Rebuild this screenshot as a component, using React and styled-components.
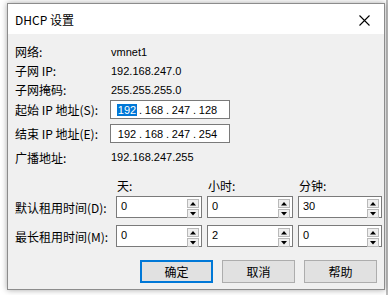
import React from "react";
import styled, { createGlobalStyle } from "styled-components";

const GlobalStyle = createGlobalStyle`
  html, body {
    margin: 0;
    padding: 0;
    background: #ffffff;
  }
`;

const CJK = `"Noto Sans CJK SC", "Microsoft YaHei", sans-serif`;
const LATIN = `"Liberation Sans", Arial, sans-serif`;

// 전체 화면 (뒤쪽 창 포함)
const Desktop = styled.div`
  position: relative;
  width: 388px;
  height: 295px;
  overflow: hidden;
  background: #ffffff;
`;

// 오른쪽 끝에 보이는 뒤쪽 창 테두리
const BackEdge = styled.div`
  position: absolute;
  right: 0;
  top: 0;
  width: 2px;
  height: 295px;
  background: #bcbcbc;
`;

const Window = styled.div`
  position: absolute;
  left: 7px;
  top: 3px;
  width: 376px;
  height: 285px;
  border: 1px solid #8c8c8c;
  background: #f0f0f0;
  box-shadow: 0 0 6px rgba(0, 0, 0, 0.35);
  display: flex;
  flex-direction: column;
`;

const TitleBar = styled.div`
  height: 30px;
  flex: none;
  background: #ffffff;
  display: flex;
  align-items: center;
  justify-content: space-between;
  padding: 0 6px 0 7px;
`;

const Title = styled.div`
  font-family: ${CJK};
  font-size: 12px;
  color: #000;
  margin-top: 1px;
`;

const CloseBox = styled.div`
  width: 28px;
  height: 22px;
  display: flex;
  align-items: center;
  justify-content: center;
  margin-top: 2px;
`;

const Body = styled.div`
  flex: 1;
  display: flex;
  flex-direction: column;
  padding: 8px 7px 0 7px;
`;

const Row = styled.div`
  display: flex;
  align-items: center;
  height: ${(p) => p.$h}px;
  margin-top: ${(p) => p.$mt || 0}px;
`;

const Label = styled.div`
  width: 96px;
  flex: none;
  font-family: ${CJK};
  font-size: 12px;
  color: #000;
  white-space: nowrap;
`;

const Value = styled.div`
  font-family: ${LATIN};
  font-size: 11px;
  color: #000;
`;

const IpBox = styled.div`
  width: 113px;
  height: 17px;
  margin-left: -1px;
  border: 1px solid #7a7a7a;
  background: #fff;
  display: flex;
  align-items: center;
  padding-left: 5px;
  font-family: ${LATIN};
  font-size: 11px;
  color: #000;
`;

const Octet = styled.span`
  width: 22px;
  text-align: center;
`;

const Selected = styled.span`
  background: #0078d7;
  color: #fff;
  padding: 0 1px;
`;

const Dot = styled.span`
  width: 5px;
  text-align: center;
`;

const LeaseGrid = styled.div`
  display: grid;
  grid-template-columns: 96px 86px 86px 84px;
  column-gap: 5px;
  align-items: center;
  height: ${(p) => p.$h}px;
  margin-top: ${(p) => p.$mt || 0}px;
`;

const ColHead = styled.div`
  font-family: ${CJK};
  font-size: 12px;
  color: #000;
  padding-left: 1px;
`;

const Spin = styled.div`
  height: 20px;
  border: 1px solid #7a7a7a;
  background: #fff;
  display: flex;
  align-items: flex-start;
  justify-content: space-between;
  padding: 0 2px 0 4px;
`;

const SpinValue = styled.span`
  font-family: ${LATIN};
  font-size: 11px;
  color: #000;
  margin-top: 3px;
`;

const Arrows = styled.div`
  display: flex;
  flex-direction: column;
  gap: 1px;
  margin-top: 2px;
`;

const ArrowBtn = styled.div`
  width: 10px;
  height: 7px;
  border: 1px solid #b9b9b9;
  background: #efefef;
  display: flex;
  align-items: center;
  justify-content: center;
`;

const ButtonBar = styled.div`
  display: flex;
  justify-content: flex-end;
  gap: 9px;
  margin-top: 13px;
`;

const Button = styled.div`
  width: 73px;
  height: 23px;
  box-sizing: border-box;
  background: #e1e1e1;
  border: ${(p) => (p.$default ? "2px solid #0078d7" : "1px solid #adadad")};
  display: flex;
  align-items: center;
  justify-content: center;
  font-family: ${CJK};
  font-size: 12px;
  color: #000;
`;

function Tri({ down }) {
  return (
    <svg width="6" height="4" viewBox="0 0 6 4">
      <path d={down ? "M0 0 L6 0 L3 3.5 Z" : "M3 0 L6 3.5 L0 3.5 Z"} fill="#000" />
    </svg>
  );
}

function SpinBox({ value }) {
  return (
    <Spin>
      <SpinValue>{value}</SpinValue>
      <Arrows>
        <ArrowBtn>
          <Tri />
        </ArrowBtn>
        <ArrowBtn>
          <Tri down />
        </ArrowBtn>
      </Arrows>
    </Spin>
  );
}

function IpField({ parts, selectFirst }) {
  return (
    <IpBox>
      {parts.map((p, i) => (
        <React.Fragment key={i}>
          {i > 0 && <Dot>.</Dot>}
          <Octet>{i === 0 && selectFirst ? <Selected>{p}</Selected> : p}</Octet>
        </React.Fragment>
      ))}
    </IpBox>
  );
}

export default function App() {
  return (
    <>
      <GlobalStyle />
      <Desktop>
        <BackEdge />
        <Window>
          <TitleBar>
            <Title>DHCP 设置</Title>
            <CloseBox>
              <svg width="11" height="11" viewBox="0 0 11 11">
                <path d="M0.5 0.5 L10.5 10.5 M10.5 0.5 L0.5 10.5" stroke="#000" strokeWidth="1.1" />
              </svg>
            </CloseBox>
          </TitleBar>

          <Body>
            <Row $h={19}>
              <Label>网络:</Label>
              <Value>vmnet1</Value>
            </Row>
            <Row $h={19}>
              <Label>子网 IP:</Label>
              <Value>192.168.247.0</Value>
            </Row>
            <Row $h={19}>
              <Label>子网掩码:</Label>
              <Value>255.255.255.0</Value>
            </Row>
            <Row $h={19} $mt={1}>
              <Label>起始 IP 地址(S):</Label>
              <IpField parts={["192", "168", "247", "128"]} selectFirst />
            </Row>
            <Row $h={19} $mt={5}>
              <Label>结束 IP 地址(E):</Label>
              <IpField parts={["192", "168", "247", "254"]} />
            </Row>
            <Row $h={20} $mt={4}>
              <Label>广播地址:</Label>
              <Value>192.168.247.255</Value>
            </Row>

            <LeaseGrid $h={18} $mt={9}>
              <span />
              <ColHead>天:</ColHead>
              <ColHead>小时:</ColHead>
              <ColHead>分钟:</ColHead>
            </LeaseGrid>
            <LeaseGrid $h={22} $mt={2}>
              <Label>默认租用时间(D):</Label>
              <SpinBox value="0" />
              <SpinBox value="0" />
              <SpinBox value="30" />
            </LeaseGrid>
            <LeaseGrid $h={22} $mt={7}>
              <Label>最长租用时间(M):</Label>
              <SpinBox value="0" />
              <SpinBox value="2" />
              <SpinBox value="0" />
            </LeaseGrid>

            <ButtonBar>
              <Button $default>确定</Button>
              <Button>取消</Button>
              <Button>帮助</Button>
            </ButtonBar>
          </Body>
        </Window>
      </Desktop>
    </>
  );
}
